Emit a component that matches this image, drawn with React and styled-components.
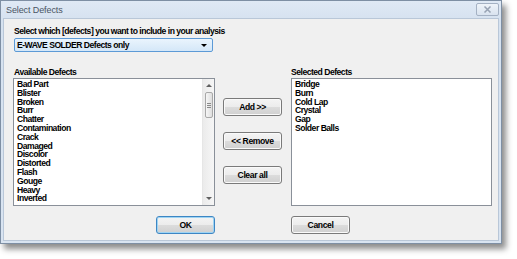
import React from 'react'
import styled, { createGlobalStyle } from 'styled-components'

const available = [
  'Bad Part', 'Blister', 'Broken', 'Burr', 'Chatter', 'Contamination', 'Crack',
  'Damaged', 'Discolor', 'Distorted', 'Flash', 'Gouge', 'Heavy', 'Inverted'
]
const selected = ['Bridge', 'Burn', 'Cold Lap', 'Crystal', 'Gap', 'Solder Balls']

const GlobalStyle = createGlobalStyle`
  body {
    margin: 0;
    background: #ffffff;
    font-family: "Liberation Sans", Arial, sans-serif;
  }
`

const Page = styled.div`
  width: 517px;
  height: 259px;
  overflow: hidden;
`

const Window = styled.div`
  width: 502px;
  height: 244px;
  border: 1px solid #7e8fa4;
  background: linear-gradient(#dfe9f5, #d6e2f0 18px, #d9e4f1);
  box-shadow: 4px 5px 6px rgba(0, 0, 0, 0.45);
  display: flex;
  flex-direction: column;
  padding: 0 2px 2px 2px;
  box-sizing: border-box;
`

const TitleBar = styled.div`
  height: 17px;
  display: flex;
  align-items: center;
  justify-content: space-between;
  padding-left: 3px;
  flex-shrink: 0;
`

const Title = styled.span`
  font-size: 9px;
  color: #4b5563;
  letter-spacing: -0.1px;
`

const CloseButton = styled.div`
  width: 21px;
  height: 11px;
  margin-right: 0px;
  margin-top: -1px;
  border: 1px solid #a4b1c3;
  border-radius: 2px;
  background: linear-gradient(#eef3f9, #d9e3ef);
  display: flex;
  align-items: center;
  justify-content: center;
`

const Client = styled.div`
  flex: 1;
  background: #f0f0f0;
  border: 1px solid #b9c7d8;
  padding: 7px 0 0 9px;
  display: flex;
  flex-direction: column;
`

const Label = styled.div`
  font-size: 8.6px;
  font-weight: bold;
  letter-spacing: -0.5px;
  line-height: 11px;
  color: #000;
  margin-left: ${(p) => p.$indent || 0}px;
  grid-column: ${(p) => p.$col || 'auto'};
`

const Combo = styled.div`
  margin-top: 1px;
  margin-left: 1px;
  width: 199px;
  height: 14px;
  box-sizing: border-box;
  border: 1px solid #5c9ad6;
  border-radius: 2px;
  background: linear-gradient(#eaf4fd, #d4e7f8);
  display: flex;
  align-items: center;
  justify-content: space-between;
  padding: 0 5px 0 2px;
  font-size: 8.6px;
  font-weight: bold;
  letter-spacing: -0.5px;
  color: #000;
`

const Arrow = styled.span`
  width: 0;
  height: 0;
  border-left: 3px solid transparent;
  border-right: 3px solid transparent;
  border-top: ${(p) => (p.$up ? 'none' : '3px solid ' + p.$color)};
  border-bottom: ${(p) => (p.$up ? '3px solid ' + p.$color : 'none')};
  margin-top: ${(p) => p.$push || 0};
`

const Grid = styled.div`
  margin-top: 15px;
  display: grid;
  grid-template-columns: 202px 8px 59px 9px 201px;
  grid-template-rows: 11px 128px 10px 18px;
`

const ListBox = styled.div`
  grid-row: 2;
  grid-column: ${(p) => p.$col};
  background: #fff;
  border: 1px solid #8a9099;
  box-sizing: border-box;
  display: flex;
  overflow: hidden;
`

const Items = styled.div`
  flex: 1;
  padding: 1px 0 0 3px;
`

const Item = styled.div`
  font-size: 8.6px;
  font-weight: bold;
  letter-spacing: -0.5px;
  line-height: 8.8px;
  height: 8.8px;
  color: #000;
  white-space: nowrap;
`

const ScrollBar = styled.div`
  width: 12px;
  background: linear-gradient(90deg, #ebebeb, #f6f6f6);
  border-left: 1px solid #e6e6e6;
  display: flex;
  flex-direction: column;
  align-items: center;
  padding: 5px 0 5px;
  box-sizing: border-box;
`

const Thumb = styled.div`
  width: 8px;
  height: 26px;
  margin-top: 5px;
  box-sizing: border-box;
  border: 1px solid #a8a8a8;
  border-radius: 2px;
  background: linear-gradient(90deg, #f6f6f6, #dedede);
  display: flex;
  flex-direction: column;
  align-items: center;
  justify-content: center;
  gap: 1px;
  span {
    width: 4px;
    height: 1px;
    background: #8a8a8a;
  }
`

const Buttons = styled.div`
  grid-row: 2;
  grid-column: 3;
  display: flex;
  flex-direction: column;
  gap: 16px;
  padding-top: 20px;
`

const Button = styled.button`
  width: 59px;
  height: 18px;
  padding: 0;
  box-sizing: border-box;
  border: 1px solid ${(p) => (p.$default ? '#3d86c4' : '#7a7a7a')};
  box-shadow: ${(p) => (p.$default ? 'inset 0 0 0 1px #9fd4f3' : 'inset 0 0 0 1px #fafafa')};
  border-radius: 3px;
  background: linear-gradient(#f4f4f4, #ececec 50%, #dcdcdc 51%, #d0d0d0);
  font-family: "Liberation Sans", Arial, sans-serif;
  font-size: 8.6px;
  font-weight: bold;
  letter-spacing: -0.4px;
  color: #000;
  grid-row: ${(p) => p.$row || 'auto'};
  grid-column: ${(p) => p.$col || 'auto'};
  justify-self: ${(p) => p.$justify || 'stretch'};
`

const ScrollArrows = () => (
  <ScrollBar>
    <Arrow $up $color="#606060" />
    <Thumb>
      <span />
      <span />
      <span />
    </Thumb>
    <Arrow $color="#606060" $push="auto" />
  </ScrollBar>
)

export default function App() {
  return (
    <Page>
      <GlobalStyle />
      <Window>
        <TitleBar>
          <Title>Select Defects</Title>
          <CloseButton>
            <svg width="9" height="7" viewBox="0 0 9 7">
              <path d="M1.5 0.5 L7.5 6.5 M7.5 0.5 L1.5 6.5" stroke="#97a2b3" strokeWidth="1.5" />
            </svg>
          </CloseButton>
        </TitleBar>
        <Client>
          <Label $indent={1}>Select which [defects] you want to include in your analysis</Label>
          <Combo>
            <span>E-WAVE SOLDER Defects only</span>
            <Arrow $color="#000" />
          </Combo>
          <Grid>
            <Label $indent={1}>Available Defects</Label>
            <Label $col={5}>Selected Defects</Label>
            <ListBox $col={1}>
              <Items>
                {available.map((d) => (
                  <Item key={d}>{d}</Item>
                ))}
              </Items>
              <ScrollArrows />
            </ListBox>
            <Buttons>
              <Button>Add &gt;&gt;</Button>
              <Button>&lt;&lt; Remove</Button>
              <Button>Clear all</Button>
            </Buttons>
            <ListBox $col={5}>
              <Items>
                {selected.map((d) => (
                  <Item key={d}>{d}</Item>
                ))}
              </Items>
            </ListBox>
            <Button $default $row={4} $col={1} $justify="end">OK</Button>
            <Button $row={4} $col={5} $justify="start">Cancel</Button>
          </Grid>
        </Client>
      </Window>
    </Page>
  )
}
